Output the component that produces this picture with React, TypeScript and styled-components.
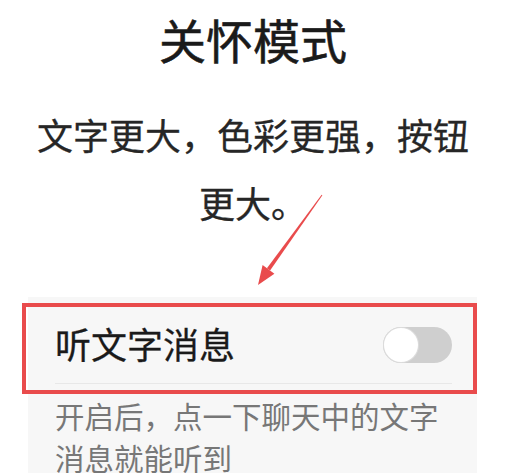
import styled, { createGlobalStyle } from "styled-components"

const GlobalStyle = createGlobalStyle`
  html, body {
    margin: 0;
    padding: 0;
    background: #ffffff;
  }
  body {
    font-family: "Noto Sans CJK SC", "Noto Sans", sans-serif;
    -webkit-font-smoothing: antialiased;
  }
`

const Page = styled.div`
  position: relative;
  width: 510px;
  height: 473px;
  overflow: hidden;
  display: flex;
  flex-direction: column;
`

const Header = styled.header`
  display: flex;
  flex-direction: column;
  align-items: center;
  padding: 9px 4px 0 0;
`

const Title = styled.h1`
  margin: 0;
  font-size: 47px;
  line-height: 60px;
  font-weight: 400;
  color: #1a1a1a;
  -webkit-text-stroke: 0.6px #1a1a1a;
`

const Intro = styled.p`
  margin: 31px 0 0;
  width: 440px;
  text-align: center;
  font-size: 36px;
  line-height: 68px;
  color: #262626;
  -webkit-text-stroke: 0.3px #262626;
`

const Card = styled.section`
  margin: 61px 33px 0 28px;
  padding-top: 6px;
  background: #f7f7f7;
  flex: 1;
`

const Highlight = styled.div`
  margin-left: -6px;
  border: 4px solid #e94b4c;
  padding: 0 21px 6px 29px;
`

const Row = styled.div`
  height: 76px;
  display: flex;
  align-items: center;
  justify-content: space-between;
  border-bottom: 1px solid #e8e8e8;
`

const Label = styled.span`
  font-size: 36px;
  line-height: 40px;
  color: #1a1a1a;
  -webkit-text-stroke: 0.3px #1a1a1a;
  margin-top: -4px;
`

const Switch = styled.div<{ $on?: boolean }>`
  width: 69px;
  height: 36px;
  border-radius: 18px;
  background: ${(p) => (p.$on ? "#07c160" : "#cfcfcf")};
  display: flex;
  align-items: center;
  justify-content: ${(p) => (p.$on ? "flex-end" : "flex-start")};
  padding: 0 1px;
  box-sizing: border-box;
`

const Knob = styled.span`
  width: 34px;
  height: 34px;
  border-radius: 50%;
  background: #ffffff;
  box-shadow: 0 0 0 1px #dcdcdc;
`

const Hint = styled.p`
  margin: 0;
  padding: 0 16px 0 27px;
  font-size: 29.5px;
  line-height: 42px;
  color: #777777;
`

const Arrow = styled.svg`
  position: absolute;
  left: 0;
  top: 0;
  pointer-events: none;
`

export default function App() {
  return (
    <>
      <GlobalStyle />
      <Page>
        <Header>
          <Title>关怀模式</Title>
          <Intro>文字更大，色彩更强，按钮更大。</Intro>
        </Header>
        <Card>
          <Highlight>
            <Row>
              <Label>听文字消息</Label>
              <Switch>
                <Knob />
              </Switch>
            </Row>
          </Highlight>
          <Hint>开启后，点一下聊天中的文字消息就能听到</Hint>
        </Card>
        <Arrow width="510" height="473" viewBox="0 0 510 473">
          <polygon
            points="321.6,194.7 322.4,195.3 270.1,270.6 266.9,268.2"
            fill="#e94b4c"
          />
          <polygon
            points="258,285 262.6,265.1 274.4,273.7"
            fill="#e94b4c"
          />
        </Arrow>
      </Page>
    </>
  )
}
